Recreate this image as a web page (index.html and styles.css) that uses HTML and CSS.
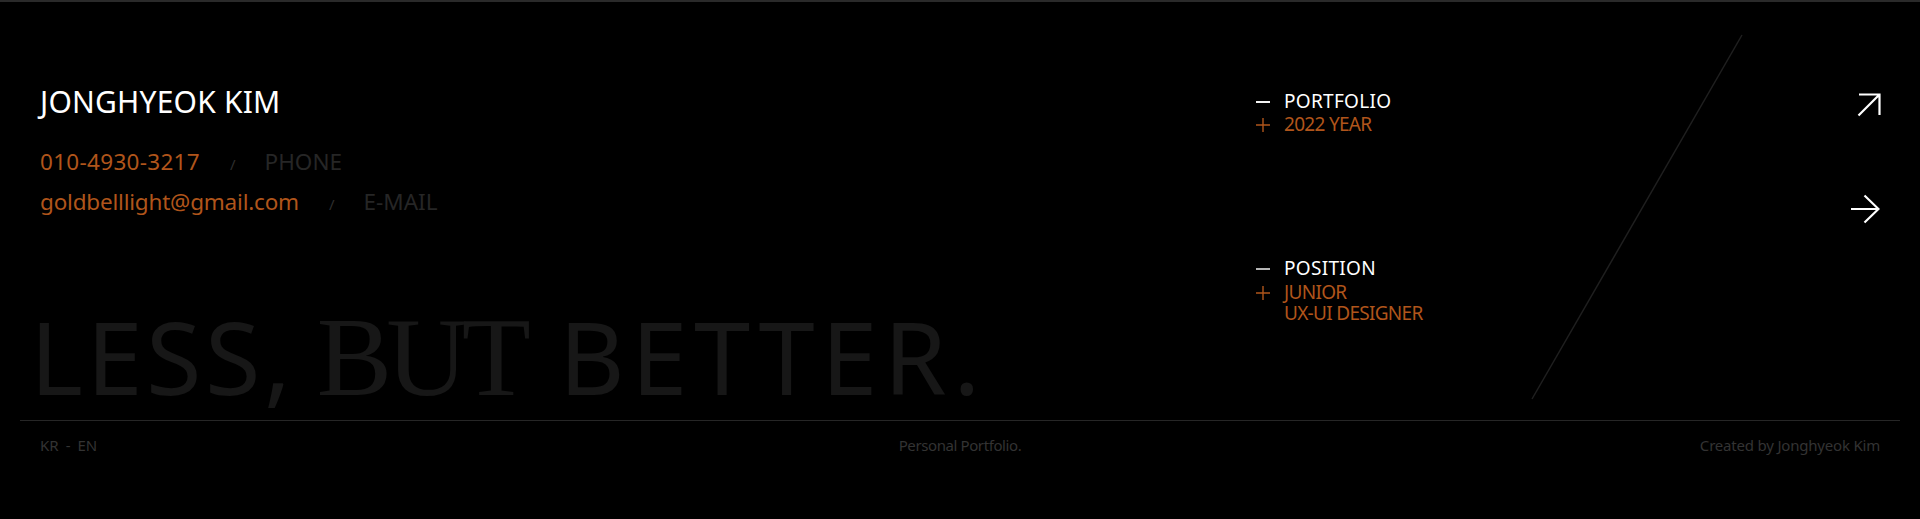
FILE: index.html
```html
<!DOCTYPE html>
<html lang="en">
<head>
<meta charset="utf-8">
<title>Jonghyeok Kim — Portfolio</title>
<link rel="stylesheet" href="styles.css">
</head>
<body>
<div class="page">
  <section class="hero">
    <svg class="slash" width="1920" height="418" viewBox="0 0 1920 418" aria-hidden="true">
      <line x1="1742" y1="33" x2="1532" y2="397" stroke="#1f1f1f" stroke-width="1.5"/>
    </svg>

    <div class="intro">
      <h1 class="name">JONGHYEOK KIM</h1>
      <ul class="contacts">
        <li><span class="value phone">010-4930-3217</span><span class="sep">/</span><span class="label">PHONE</span></li>
        <li><span class="value email">goldbelllight@gmail.com</span><span class="sep">/</span><span class="label">E-MAIL</span></li>
      </ul>
      <p class="motto"><span class="sans">LESS,</span> <span class="serif">BUT</span> <span class="sans better">BETTER.</span></p>
    </div>

    <div class="info">
      <dl class="group">
        <dt><span class="minus"></span>PORTFOLIO</dt>
        <dd><svg class="plus" width="14" height="14" viewBox="0 0 14 14"><path d="M0 7H14M7 0V14" stroke="#b0551b" stroke-width="1.4"/></svg>2022 YEAR</dd>
      </dl>
      <dl class="group group-position">
        <dt><span class="minus dim"></span>POSITION</dt>
        <dd><svg class="plus" width="14" height="14" viewBox="0 0 14 14"><path d="M0 7H14M7 0V14" stroke="#b0551b" stroke-width="1.4"/></svg><span class="line">JUNIOR</span><span class="line">UX-UI DESIGNER</span></dd>
      </dl>
    </div>

    <div class="actions">
      <a class="icon-link ne" href="#" aria-label="Open">
        <svg width="24" height="24" viewBox="0 0 24 24"><path d="M1.5 22.5L22.5 1.5M2 1.5H22.5V22" fill="none" stroke="#fff" stroke-width="2.2"/></svg>
      </a>
      <a class="icon-link next" href="#" aria-label="Next">
        <svg width="30" height="30" viewBox="0 0 30 30"><path d="M1 15H28.5M14.5 1.5L28.5 15L14.5 28.5" fill="none" stroke="#fff" stroke-width="2.2"/></svg>
      </a>
    </div>
  </section>

  <footer class="footer">
    <div class="lang">KR<span class="dash">-</span>EN</div>
    <div class="center">Personal Portfolio.</div>
    <div class="credit">Created by Jonghyeok Kim</div>
  </footer>
</div>
</body>
</html>
```

FILE: styles.css
```css
* { box-sizing: border-box; }

html, body {
  margin: 0;
  padding: 0;
  background: #000;
}

body {
  width: 1920px;
  height: 519px;
  overflow: hidden;
  font-family: "Noto Sans", "Open Sans", sans-serif;
  color: #fff;
}

.page {
  border-top: 2px solid #2a2a2a;
}

.hero {
  position: relative;
  height: 418px;
  display: grid;
  grid-template-columns: 1fr 594px 30px;
  padding: 0 40px;
}

.slash {
  position: absolute;
  left: 0;
  top: 0;
  pointer-events: none;
}

/* ---------- intro ---------- */
.intro {
  display: flex;
  flex-direction: column;
  padding-top: 82px;
  position: relative;
}

.name {
  margin: 0;
  font-size: 30px;
  line-height: 36px;
  font-weight: 400;
  letter-spacing: 0.2px;
  color: #fff;
}

.contacts {
  list-style: none;
  margin: 23px 0 0;
  padding: 0;
}

.contacts li {
  font-size: 22.5px;
  line-height: 38px;
  display: flex;
  align-items: baseline;
}

.value {
  color: #b0551b;
}

.value.phone { letter-spacing: 0.3px; }
.value.email { letter-spacing: -0.2px; }

.sep {
  color: #2e2e2e;
  font-size: 15px;
  margin: 0 29px 0 30px;
}

.label {
  color: #262626;
}

.motto {
  margin: auto 0 18px -10px;
  font-size: 101px;
  line-height: 90px;
  color: #171717;
  white-space: nowrap;
}

.motto .sans {
  letter-spacing: 3.5px;
}

.motto .better {
  letter-spacing: 6.5px;
}

.motto .serif {
  font-family: "Liberation Serif", "DejaVu Serif", serif;
  font-size: 113px;
  letter-spacing: -6px;
  margin-right: 8px;
  margin-left: -4px;
}

/* ---------- info ---------- */
.info {
  padding-top: 89px;
  position: relative;
}

.group {
  margin: 0;
  font-size: 19px;
  line-height: 21px;
  letter-spacing: 0.3px;
}

.group dt,
.group dd {
  margin: 0;
  padding-left: 28px;
  position: relative;
}

.group dt { color: #fff; }
.group dd {
  color: #b0551b;
  margin-top: 2px;
  letter-spacing: -0.7px;
}

.group dd .line {
  display: block;
}

.group-position {
  margin-top: 123px;
}

.group-position dd {
  margin-top: 3px;
}

.minus {
  position: absolute;
  left: 0;
  top: 10px;
  width: 14px;
  height: 2px;
  background: #f2f2f2;
}

.minus.dim {
  background: #b5b5b5;
}

.plus {
  position: absolute;
  left: 0;
  top: 4px;
}

/* ---------- actions ---------- */
.actions {
  display: flex;
  flex-direction: column;
  align-items: flex-end;
  padding-top: 91px;
  position: relative;
}

.icon-link {
  display: block;
  line-height: 0;
}

.icon-link svg { display: block; }

.icon-link.ne { margin-right: -1px; }

.icon-link.next {
  margin-top: 77px;
}

/* ---------- footer ---------- */
.footer {
  margin: 0 20px;
  border-top: 1px solid #262626;
  padding: 14px 20px 0;
  display: grid;
  grid-template-columns: 1fr auto 1fr;
  font-size: 15px;
  line-height: 20px;
  color: #333;
}

.lang .dash {
  margin: 0 7px;
}

.center {
  text-align: center;
  letter-spacing: -0.4px;
}

.credit {
  justify-self: end;
  letter-spacing: -0.2px;
}
```
